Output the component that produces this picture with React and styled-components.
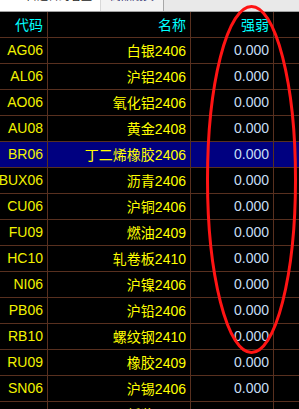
import React from "react";
import styled, { createGlobalStyle } from "styled-components";

const GlobalStyle = createGlobalStyle`
  html, body {
    margin: 0;
    padding: 0;
    background: #000;
    overflow: hidden;
  }
  body {
    font-family: "Liberation Sans", Arial, "Noto Sans CJK SC", sans-serif;
  }
`;

const rows = [
  ["AG06", "白银2406"],
  ["AL06", "沪铝2406"],
  ["AO06", "氧化铝2406"],
  ["AU08", "黄金2408"],
  ["BR06", "丁二烯橡胶2406"],
  ["BUX06", "沥青2406"],
  ["CU06", "沪铜2406"],
  ["FU09", "燃油2409"],
  ["HC10", "轧卷板2410"],
  ["NI06", "沪镍2406"],
  ["PB06", "沪铅2406"],
  ["RB10", "螺纹钢2410"],
  ["RU09", "橡胶2409"],
  ["SN06", "沪锡2406"],
  ["SP09", "纸浆2409"],
];

const SELECTED = 4;

const Screen = styled.div`
  position: relative;
  width: 299px;
  height: 409px;
  overflow: hidden;
  background: #000;
`;

const TabStrip = styled.div`
  display: flex;
  height: 11px;
  background: #e9e9e9;
  border-bottom: 1px solid #a0a0a0;
  overflow: hidden;
`;

const Tab = styled.div`
  display: flex;
  align-items: flex-start;
  justify-content: ${(p) => (p.$active ? "flex-end" : "center")};
  box-sizing: border-box;
  width: ${(p) => p.$width}px;
  padding-right: ${(p) => (p.$active ? 8 : 0)}px;
  background: ${(p) => (p.$active ? "#ffffff" : "#f3f3f3")};
  border-right: 1px solid ${(p) => (p.$active ? "#d8d8d8" : "#a8a8a8")};
  overflow: hidden;
`;

/* the tab captions sit mostly above the visible strip, only their feet show */
const TabLabel = styled.span`
  font-family: "Noto Sans CJK SC", sans-serif;
  font-size: 11px;
  line-height: 14px;
  margin-top: -12px;
  color: ${(p) => p.$color};
  white-space: nowrap;
`;

const Grid = styled.div`
  display: grid;
  grid-template-columns: 48px 143px 83px 25px;
  grid-auto-rows: 26px;
`;

const Cell = styled.div`
  box-sizing: border-box;
  display: flex;
  align-items: center;
  justify-content: flex-end;
  padding-right: 4px;
  padding-bottom: 1px;
  border-bottom: 1px solid #58301f;
  border-right: ${(p) => (p.$last ? "none" : "1px solid #58301f")};
  background: ${(p) => (p.$selected ? "#000080" : "#000")};
  color: ${(p) => p.$color};
  font-size: 14px;
  white-space: nowrap;
  overflow: hidden;
`;

const Ring = styled.svg`
  position: absolute;
  left: 0;
  top: 0;
  pointer-events: none;
`;

export default function App() {
  return (
    <>
      <GlobalStyle />
      <Screen>
        <TabStrip>
          <Tab $active $width={101}>
            <TabLabel $color="#1a1a1a">自选合约看盘</TabLabel>
          </Tab>
          <Tab $width={63}>
            <TabLabel $color="#2a2a6a">商品期货</TabLabel>
          </Tab>
        </TabStrip>
        <Grid>
          <Cell $color="#00ffff">代码</Cell>
          <Cell $color="#00ffff">名称</Cell>
          <Cell $color="#00ffff">强弱</Cell>
          <Cell $last $color="#00ffff" />
          {rows.map(([code, name], i) => {
            const sel = i === SELECTED;
            return (
              <React.Fragment key={code}>
                <Cell $selected={sel} $color="#f2f200">{code}</Cell>
                <Cell $selected={sel} $color="#ffff00">{name}</Cell>
                <Cell $selected={sel} $color="#c6def4">0.000</Cell>
                <Cell $selected={sel} $last $color="#c6def4" />
              </React.Fragment>
            );
          })}
        </Grid>
        <Ring width="299" height="409" viewBox="0 0 299 409">
          <ellipse cx="251.5" cy="179.5" rx="44" ry="173" fill="none" stroke="#ff1414" strokeWidth="3" />
        </Ring>
      </Screen>
    </>
  );
}
